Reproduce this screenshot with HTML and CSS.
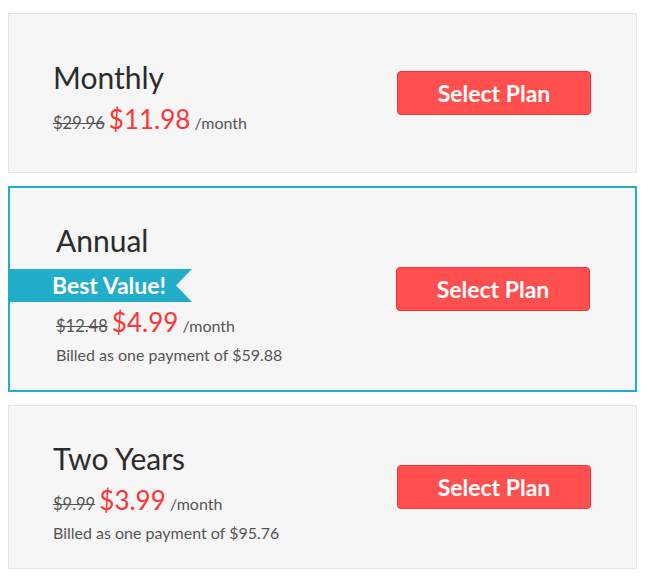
FILE: index.html
```html
<!DOCTYPE html>
<html>
<head>
<meta charset="utf-8">
<link rel="stylesheet" href="styles.css">
</head>
<body>
<div class="plans">
  <div class="card">
    <div class="info">
      <h2 class="title">Monthly</h2>
      <div class="price"><s class="old">$29.96</s> <span class="now">$11.98</span> <span class="per">/month</span></div>
    </div>
    <button class="select">Select Plan</button>
  </div>
  <div class="card featured">
    <div class="info">
      <h2 class="title">Annual</h2>
      <div class="ribbon">Best Value!</div>
      <div class="price"><s class="old">$12.48</s> <span class="now">$4.99</span> <span class="per">/month</span></div>
      <div class="billed">Billed as one payment of $59.88</div>
    </div>
    <button class="select">Select Plan</button>
  </div>
  <div class="card">
    <div class="info">
      <h2 class="title">Two Years</h2>
      <div class="price"><s class="old">$9.99</s> <span class="now">$3.99</span> <span class="per">/month</span></div>
      <div class="billed">Billed as one payment of $95.76</div>
    </div>
    <button class="select">Select Plan</button>
  </div>
</div>
</body>
</html>
```
FILE: styles.css
```css
* { box-sizing: border-box; }
html, body { margin: 0; padding: 0; background: #fff; }
body { font-family: Lato, "Open Sans", sans-serif; color: #333; }
.plans {
  width: 629px;
  margin: 13px 0 0 8px;
  display: flex;
  flex-direction: column;
  gap: 13px;
}
.card {
  display: flex;
  align-items: center;
  justify-content: space-between;
  min-height: 160px;
  background: #f6f6f6;
  border: 1px solid #e4e4e4;
  padding: 0 45px 0 44px;
}
.card.featured {
  border: 2px solid #22adc8;
  padding-left: 46px;
}
.info {
  padding: 34px 0 22px;
}
.title {
  margin: 0;
  font-size: 30px;
  line-height: 36px;
  font-weight: 400;
  color: #2b2b2b;
}
.price {
  margin-top: 8px;
  font-size: 16px;
  line-height: 32px;
  color: #555;
}
.ribbon + .price {
  margin-top: 4px;
}
.old { color: #555; font-size: 16.5px; }
.now { color: #fc3535; font-size: 26px; }
.per { color: #555; font-size: 16px; }
.billed {
  font-size: 16px;
  line-height: 26px;
  color: #555;
}
.ribbon {
  margin: 11px 0 0 -46px;
  width: 182px;
  height: 33px;
  padding-left: 42px;
  background: #22aec8;
  color: #fff;
  font-weight: 700;
  font-size: 23px;
  line-height: 33px;
  clip-path: polygon(0 0, 100% 0, calc(100% - 16px) 50%, 100% 100%, 0 100%);
}
.select {
  width: 194px;
  height: 44px;
  background: #ff4f4f;
  border: 1px solid #f53131;
  border-radius: 4px;
  color: #fff;
  font-family: Lato, sans-serif;
  font-weight: 700;
  font-size: 23px;
  padding: 0;
  cursor: pointer;
}
```
